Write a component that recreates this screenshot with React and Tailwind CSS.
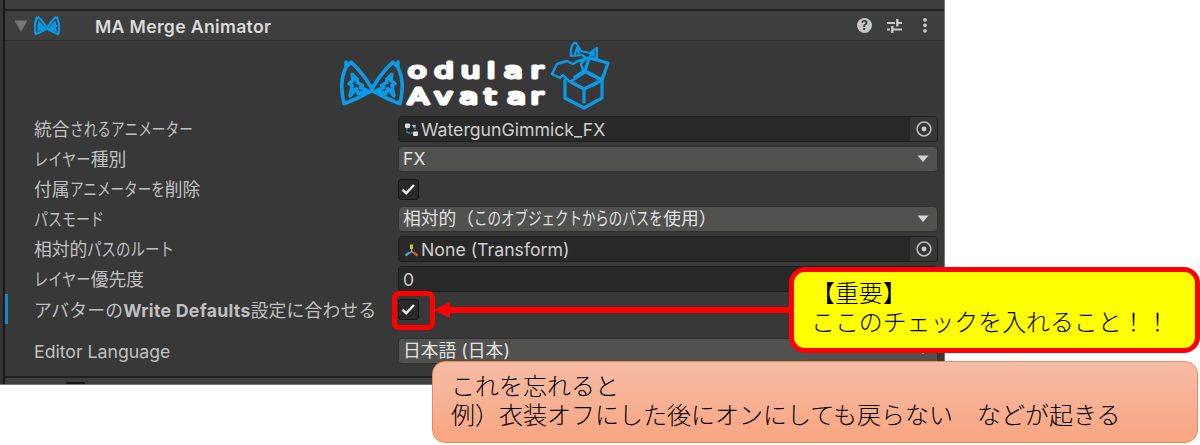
import React from "react";

const KANA_RUN = /([\u3040-\u30ff]+)/;

// Interface text in which kana are set narrower than kanji.
function UiText({ children, kana = 13.7 }) {
  return (
    <span className="flex items-center whitespace-pre">
      {children.split(KANA_RUN).map((run, i) =>
        KANA_RUN.test(run) ? (
          <span key={i} className="inline-block" style={{ width: run.length * kana }}>
            <span
              className="inline-block origin-left"
              style={{ transform: `scaleX(${kana / 17.8})` }}
            >
              {run}
            </span>
          </span>
        ) : (
          <span key={i}>{run}</span>
        )
      )}
    </span>
  );
}

function Row({ label, children, className = "" }) {
  return (
    <div className={`flex h-[30px] items-center ${className}`}>
      <div className="w-[364px] shrink-0 whitespace-nowrap pt-[2px] text-[#c0c0c0]">{label}</div>
      {children}
    </div>
  );
}

function ObjectField({ icon, children }) {
  return (
    <div className="flex h-[26px] w-[540px] items-center rounded-[4px] border border-[#202020] bg-[#292929] pl-[5px] text-[#cecece]">
      {icon}
      <span className="ml-[2px] grow pt-[2px] text-[17.7px]">{children}</span>
      <span className="flex h-full w-[27px] items-center justify-center rounded-r-[3px] bg-[#363636]">
        <svg width="16" height="16" viewBox="0 0 16 16" fill="none">
          <circle cx="8" cy="8" r="6.9" stroke="#bdbdbd" strokeWidth="1.5" />
          <circle cx="8" cy="8" r="2.4" fill="#d0d0d0" />
        </svg>
      </span>
    </div>
  );
}

function Dropdown({ children }) {
  return (
    <div className="flex h-[26px] w-[540px] items-center justify-between rounded-[4px] border border-[#303030] bg-[#515150] pl-[4px] pr-2 text-[#e2e2e2]">
      <div>{children}</div>
      <svg width="12" height="8" viewBox="0 0 12 8">
        <path d="M0.5 0.5H11.5L6 7Z" fill="#d4d4d4" />
      </svg>
    </div>
  );
}

function Checkbox() {
  return (
    <div className="flex size-[21px] items-center justify-center rounded-[3px] border border-[#171717] bg-[#292929]">
      <svg width="15" height="13" viewBox="0 0 15 13" fill="none">
        <path d="M1.5 6.7L5.2 10.3L13 2" stroke="#ececec" strokeWidth="2.4" />
      </svg>
    </div>
  );
}

function Ears({ className, stroke }) {
  return (
    <svg className={className} viewBox="0 0 63 46" fill="none" stroke="#0a9be8" strokeWidth={stroke} strokeLinejoin="round" strokeLinecap="round">
      <path d="M31.5 29L25 19L18 10L11 3L8 6L6 3L6 8C1 18 1 32 4 44L18 38L31.5 31L45 38L59 44C62 32 62 18 57 8L57 3L55 6L52 3L45 10L38 19Z" />
      <path d="M10 36L12 26L9 24L13 21L12 15L17 20L17 23L22 26L20 28L27 31L18 34L16 29L10 36Z" />
      <path d="M53 36L51 26L54 24L50 21L51 15L46 20L46 23L41 26L43 28L36 31L45 34L47 29L53 36Z" />
    </svg>
  );
}

function Logo() {
  return (
    <svg width="274" height="72" viewBox="0 0 274 72" fill="none" className="block">
      <svg x="0" y="18" width="64" height="47" viewBox="0 0 63 46">
        <Ears stroke={3.6} />
      </svg>
      <g
        transform="scale(1.42 1)"
        fill="#fff"
        stroke="#fff"
        strokeWidth="2.8"
        strokeLinejoin="round"
        fontFamily="DejaVu Sans"
        fontSize="21.8"
      >
        <text x="47.8 66.4 85 103.4 115.4 134.2" y="37.4">odular</text>
        <text x="47.8 66.4 84 101.4 117.6 134.2" y="63.2">Avatar</text>
      </g>
      <g stroke="#0a9be8" strokeWidth="3.2" strokeLinejoin="round" strokeLinecap="round">
        <path d="M225 39V57L244 67L262 57V39L244 48L231 41M244 48V61M262 39L244 30L235 36M244 48L257 42" />
        <path d="M249 17L268 22L262 39L245 30Z" />
        <path strokeWidth="2.4" d="M227 20L217 23L212 33L220 37L223 34L230 41L244 32L241 23L245 18L238 20L233 23Z" />
        <path strokeWidth="2.2" d="M231 15C230 7 233 1 236 2L241 10L250 12L257 7V17L248 18L242 14L231 15ZM235 13L237 7L239 12M250 15L254 12V15" />
      </g>
    </svg>
  );
}

function Header() {
  return (
    <div className="flex h-[32px] items-center border-b border-t-2 border-b-[#2f2f2f] border-t-[#202020] bg-[#3e3e3e] pl-[9px] pr-[16px]">
      <svg width="14" height="12" viewBox="0 0 14 12">
        <path d="M0.5 0.5H13.5L7 12Z" fill="#757575" />
      </svg>
      <Ears className="ml-[6px] h-[19px] w-[26px]" stroke={5} />
      <span className="ml-[35px] grow pt-[2px] text-[17.7px] font-semibold tracking-[0.3px] text-[#dadada]">MA Merge Animator</span>
      <div className="flex size-[15px] items-center justify-center rounded-full bg-[#c8c8c8] text-[13px] font-bold leading-none text-[#3b3b3b]">?</div>
      <svg className="ml-[14px]" width="17" height="16" viewBox="0 0 17 16" stroke="#c8c8c8" strokeWidth="1.8">
        <path d="M1 5H9M12 5H16M1 11.5H4M7 11.5H16" />
        <path d="M11.3 1V8.5M6.3 8V15" strokeWidth="2.4" />
      </svg>
      <svg className="ml-[19px]" width="6" height="17" viewBox="0 0 6 17" fill="#c8c8c8">
        <circle cx="3" cy="2.8" r="1.9" />
        <circle cx="3" cy="8.3" r="1.9" />
        <circle cx="3" cy="13.8" r="1.9" />
      </svg>
    </div>
  );
}

const controllerIcon = (
  <svg width="15" height="15" viewBox="0 0 15 15" fill="none">
    <path d="M5 3.5H11V8M3 6V11H9" stroke="#3c8ca8" strokeWidth="1.4" strokeDasharray="2 1" />
    <rect x="1" y="1.5" width="5" height="4.5" rx="1" fill="#ddd" />
    <rect x="9" y="9.5" width="5" height="4.5" rx="1" fill="#ddd" />
    <rect x="9" y="3" width="2.5" height="2.5" fill="#bbb" />
  </svg>
);

const transformIcon = (
  <svg width="15" height="15" viewBox="0 0 15 15" fill="none" strokeWidth="2.3">
    <path d="M7.5 7V2.5" stroke="#d5bd24" strokeWidth="3" />
    <path d="M5.5 10.5L1.5 13.5" stroke="#39a8dc" />
    <path d="M9.5 10.5L13.5 13.5" stroke="#e45732" />
    <path d="M7.5 7V9.5L5.5 11M7.5 9.5L9.5 11" stroke="#aaa" strokeWidth="1.2" />
  </svg>
);

export default function App() {
  return (
    <div className="relative h-[445px] w-[1200px] overflow-hidden bg-white font-['Inter','Noto_Sans_CJK_JP',sans-serif] text-[17.8px] leading-[26px]">
      <div className="flex h-[385px] w-[945px] border-b border-r border-[#777] bg-[#383838]">
        <div className="w-[5px] shrink-0 border-r-2 border-[#191919] bg-[#353535]" />
        <div className="flex min-w-0 grow flex-col">
          <div className="h-[9px] shrink-0 bg-[#3e3e3e]" />
          <Header />
          <div className="flex h-[73px] shrink-0 items-start pl-[335px]">
            <Logo />
          </div>
          <div className="flex flex-col pl-[29px]">
            <Row label={<UiText>統合されるアニメーター</UiText>}>
              <ObjectField icon={controllerIcon}>WatergunGimmick_FX</ObjectField>
            </Row>
            <Row label={<UiText kana={14.2}>レイヤー種別</UiText>}>
              <Dropdown><span className="text-[17.6px]">FX</span></Dropdown>
            </Row>
            <Row label={<UiText kana={13.6}>付属アニメーターを削除</UiText>}>
              <Checkbox />
            </Row>
            <Row label={<UiText kana={14}>パスモード</UiText>}>
              <Dropdown><UiText kana={13.5}>相対的（このオブジェクトからのパスを使用）</UiText></Dropdown>
            </Row>
            <Row label={<UiText kana={14.5}>相対的パスのルート</UiText>}>
              <ObjectField icon={transformIcon}>None (Transform)</ObjectField>
            </Row>
            <Row label={<UiText kana={14.2}>レイヤー優先度</UiText>}>
              <div className="flex h-[26px] w-[540px] items-center rounded-[4px] border border-[#1d1d1d] bg-[#292929] pl-1 pt-[2px] text-[17.6px] text-[#cecece]">0</div>
            </Row>
            <Row
              className="-ml-[29px] border-l-[3px] border-[#1489c8] pl-[26px]"
              label={
                <span className="flex items-center pt-px">
                  <span className="tracking-[0.2px]">アバターの</span>
                  <span className="text-[17.7px] font-bold tracking-[0.28px]">Write Defaults</span>
                  <span className="tracking-[0.2px]">設定に合わせる</span>
                </span>
              }
            >
              <Checkbox />
            </Row>
            <Row className="mt-[12px]" label={<span className="text-[17.7px]">Editor Language</span>}>
              <Dropdown>日本語 (日本)</Dropdown>
            </Row>
          </div>
          <div className="mt-auto h-[8px] border-t-2 border-[#202020] bg-[#3e3e3e] pl-[61px]">
            <div className="mt-[4px] h-[2px] w-[19px] bg-[#171717]" />
          </div>
        </div>
      </div>

      <div className="absolute left-[392px] top-[291px] h-[39px] w-[43px] rounded-[7px] border-[5px] border-[#ff0000]" />
      <svg className="absolute left-[434px] top-[301px]" width="360" height="18" viewBox="0 0 360 18" fill="#ff0000">
        <path d="M0 9L16 1V6H360V12H16V17Z" />
      </svg>
      <div className="absolute left-[789px] top-[267px] flex h-[86px] w-[411px] flex-col rounded-[16px] border-[5px] border-[#ff0000] bg-[#ffff00] pl-[17px] pt-[7px] text-[23.9px] font-light leading-[29px] text-black">
        <div>【重要】</div>
        <div className="whitespace-nowrap">ここのチェックを入れること！！</div>
      </div>
      <div className="absolute left-[432px] top-[361px] flex h-[82px] w-[766px] flex-col rounded-[13px] border border-[#ed8b4c] bg-linear-to-b from-[#f7bca6] to-[#f8a581] pl-[18px] pt-[10px] text-[24px] font-light leading-[29px] text-black">
        <div>これを忘れると</div>
        <div className="whitespace-nowrap">例）衣装オフにした後にオンにしても戻らない　などが起きる</div>
      </div>
    </div>
  );
}
